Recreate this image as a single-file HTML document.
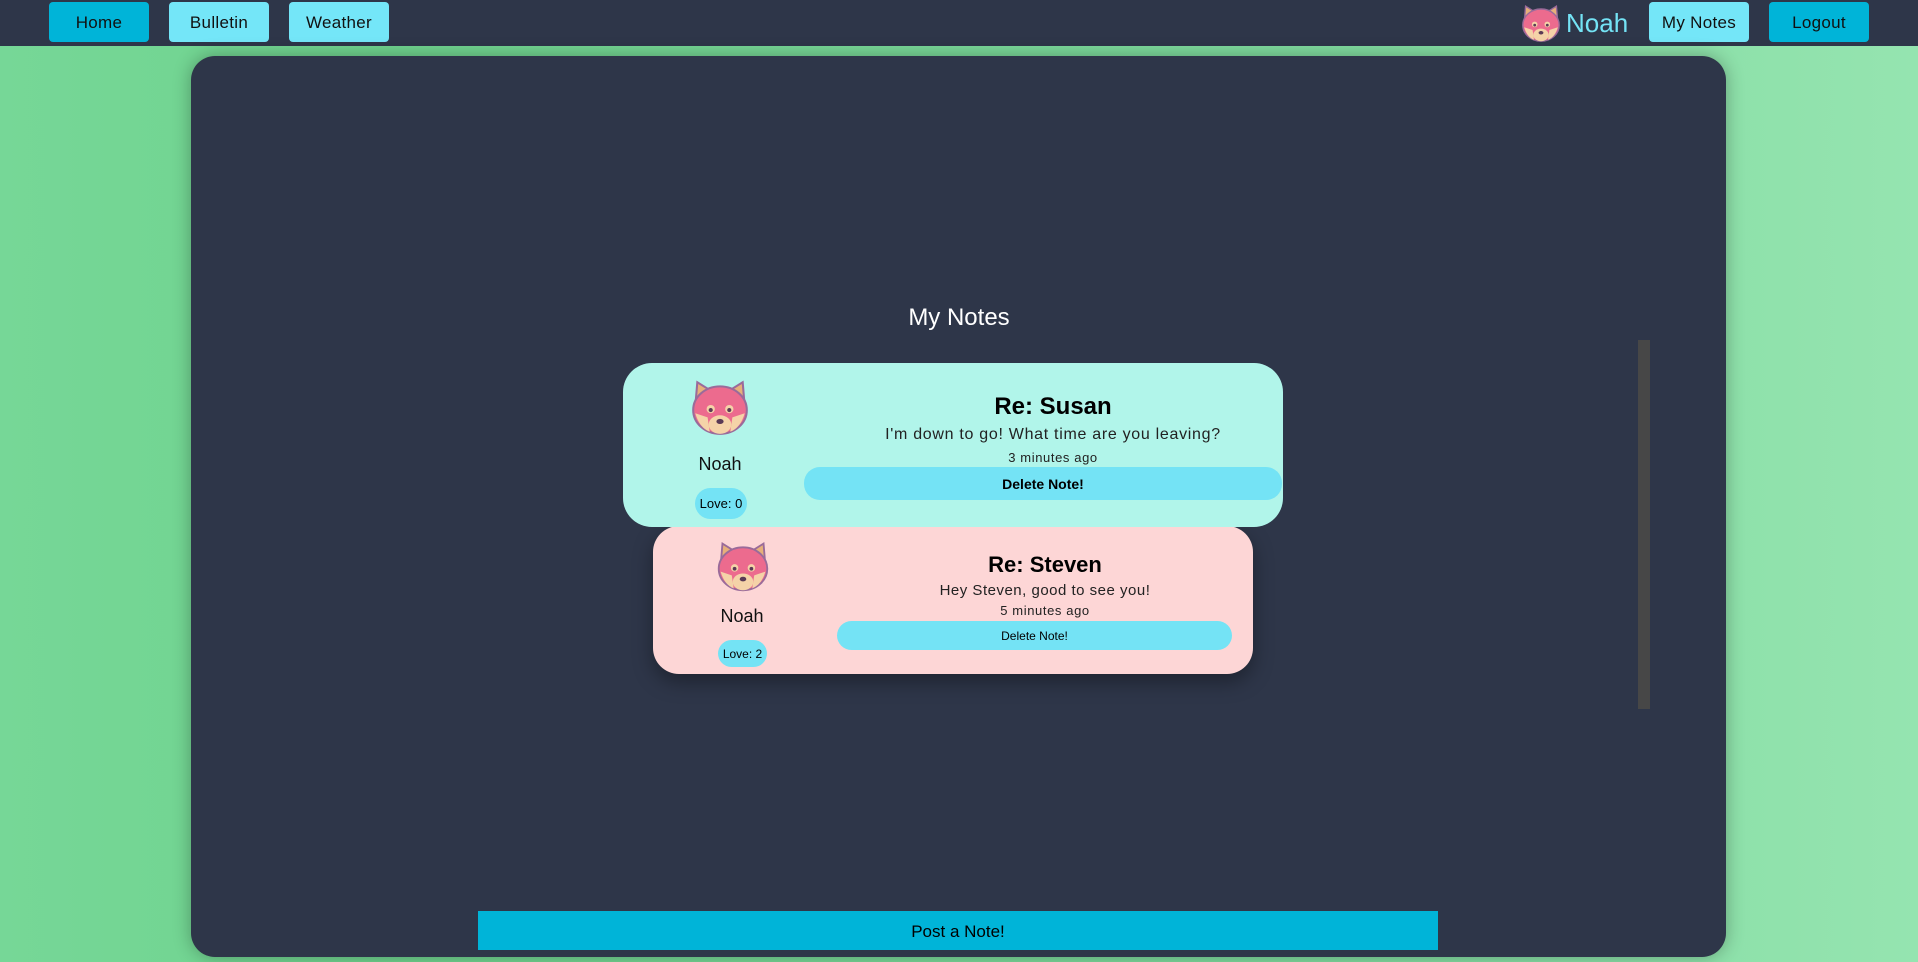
<!DOCTYPE html>
<html><head><meta charset="utf-8"><style>
*{box-sizing:border-box;margin:0;padding:0}
body{width:1918px;height:962px;overflow:hidden;font-family:"Liberation Sans","DejaVu Sans",sans-serif;background:linear-gradient(90deg,#76d797 0%,#6fd38e 20%,#80db9f 70%,#95e4b0 100%);position:relative}
.nav{position:absolute;left:0;top:0;width:1918px;height:46px;background:#2e3649}
.btn{position:absolute;top:2px;height:40px;width:100px;border-radius:4px;display:flex;align-items:center;justify-content:center;font-size:17px;color:#111;letter-spacing:.3px;padding-top:2px}
.dark{background:#00b4d8}.light{background:#74e6f8}
.panel{position:absolute;left:191px;top:56px;width:1535px;height:901px;background:#2e3649;border-radius:24px;box-shadow:0 0 18px rgba(0,0,0,.3)}
.abs{position:absolute}
.c{text-align:center;white-space:nowrap}
.pill{position:absolute;background:#74e3f5;border-radius:16px;display:flex;align-items:center;justify-content:center;color:#000}
</style></head><body>
<svg width="0" height="0" style="position:absolute"><defs>
<g id="rp">
<path d="M8 30 L10 6 L26 16 Z" fill="#e6b07a" stroke="#9a6b9a" stroke-width="2"/>
<path d="M56 30 L54 6 L38 16 Z" fill="#e6b07a" stroke="#9a6b9a" stroke-width="2"/>
<ellipse cx="32" cy="33" rx="26" ry="23" fill="#ec6b8e" stroke="#9a6b9a" stroke-width="2"/>
<path d="M8 36 Q12 50 22 54 L20 40 Z" fill="#f5d3a8"/>
<path d="M56 36 Q52 50 42 54 L44 40 Z" fill="#f5d3a8"/>
<ellipse cx="32" cy="47" rx="11" ry="9" fill="#f5d3a8"/>
<circle cx="23" cy="32" r="4" fill="#f5d3a8"/><circle cx="41" cy="32" r="4" fill="#f5d3a8"/>
<circle cx="23" cy="33" r="2" fill="#5a3a55"/><circle cx="41" cy="33" r="2" fill="#5a3a55"/>
<ellipse cx="32" cy="44" rx="3.5" ry="2.5" fill="#5a3a55"/>
</g></defs></svg>
<div class="nav">
<div class="btn dark" style="left:49px">Home</div>
<div class="btn light" style="left:169px">Bulletin</div>
<div class="btn light" style="left:289px">Weather</div>
<svg class="abs" style="left:1518px;top:2px" width="46" height="42" viewBox="0 0 64 60"><use href="#rp"/></svg>
<div class="abs" style="left:1566px;top:8px;font-size:26px;color:#74e3f5">Noah</div>
<div class="btn light" style="left:1649px">My Notes</div>
<div class="btn dark" style="left:1769px">Logout</div>
</div>
<div class="panel"></div>
<div class="abs c" style="left:859px;width:200px;top:304px;font-size:24px;color:#fff">My Notes</div>
<div class="abs" style="left:1638px;top:340px;width:12px;height:369px;background:#474747"></div>

<div class="abs" style="left:653px;top:526px;width:600px;height:148px;background:#fdd6d6;border-radius:26px;box-shadow:0 8px 20px rgba(0,0,0,.35)"></div>
<div class="abs" style="left:623px;top:363px;width:660px;height:164px;background:#b1f5ea;border-radius:29px"></div>

<svg class="abs" style="left:687px;top:376px" width="66" height="62" viewBox="0 0 64 60"><use href="#rp"/></svg>
<div class="abs c" style="left:670px;width:100px;top:454px;font-size:18px;color:#111">Noah</div>
<div class="pill" style="left:695px;top:488px;width:52px;height:31px;font-size:13px">Love: 0</div>
<div class="abs c" style="left:853px;width:400px;top:393px;font-size:24px;font-weight:bold;color:#000">Re: Susan</div>
<div class="abs c" style="left:853px;width:400px;top:426px;font-size:16px;color:#222;letter-spacing:.7px">I'm down to go! What time are you leaving?</div>
<div class="abs c" style="left:953px;width:200px;top:450px;font-size:13px;color:#222;letter-spacing:.6px">3 minutes ago</div>
<div class="pill" style="left:804px;top:467px;width:478px;height:33px;font-size:14px;font-weight:bold">Delete Note!</div>

<svg class="abs" style="left:713px;top:538px" width="60" height="56" viewBox="0 0 64 60"><use href="#rp"/></svg>
<div class="abs c" style="left:692px;width:100px;top:606px;font-size:18px;color:#111">Noah</div>
<div class="pill" style="left:718px;top:640px;width:49px;height:27px;font-size:12px">Love: 2</div>
<div class="abs c" style="left:845px;width:400px;top:552px;font-size:22px;font-weight:bold;color:#000">Re: Steven</div>
<div class="abs c" style="left:845px;width:400px;top:582px;font-size:15px;color:#222;letter-spacing:.5px">Hey Steven, good to see you!</div>
<div class="abs c" style="left:945px;width:200px;top:603px;font-size:13px;color:#222;letter-spacing:.6px">5 minutes ago</div>
<div class="pill" style="left:837px;top:621px;width:395px;height:29px;font-size:12px">Delete Note!</div>

<div class="abs" style="left:478px;top:911px;width:960px;height:39px;background:#00b4d8;display:flex;align-items:center;justify-content:center;font-size:17px;color:#000;padding-top:2px">Post a Note!</div>
</body></html>
